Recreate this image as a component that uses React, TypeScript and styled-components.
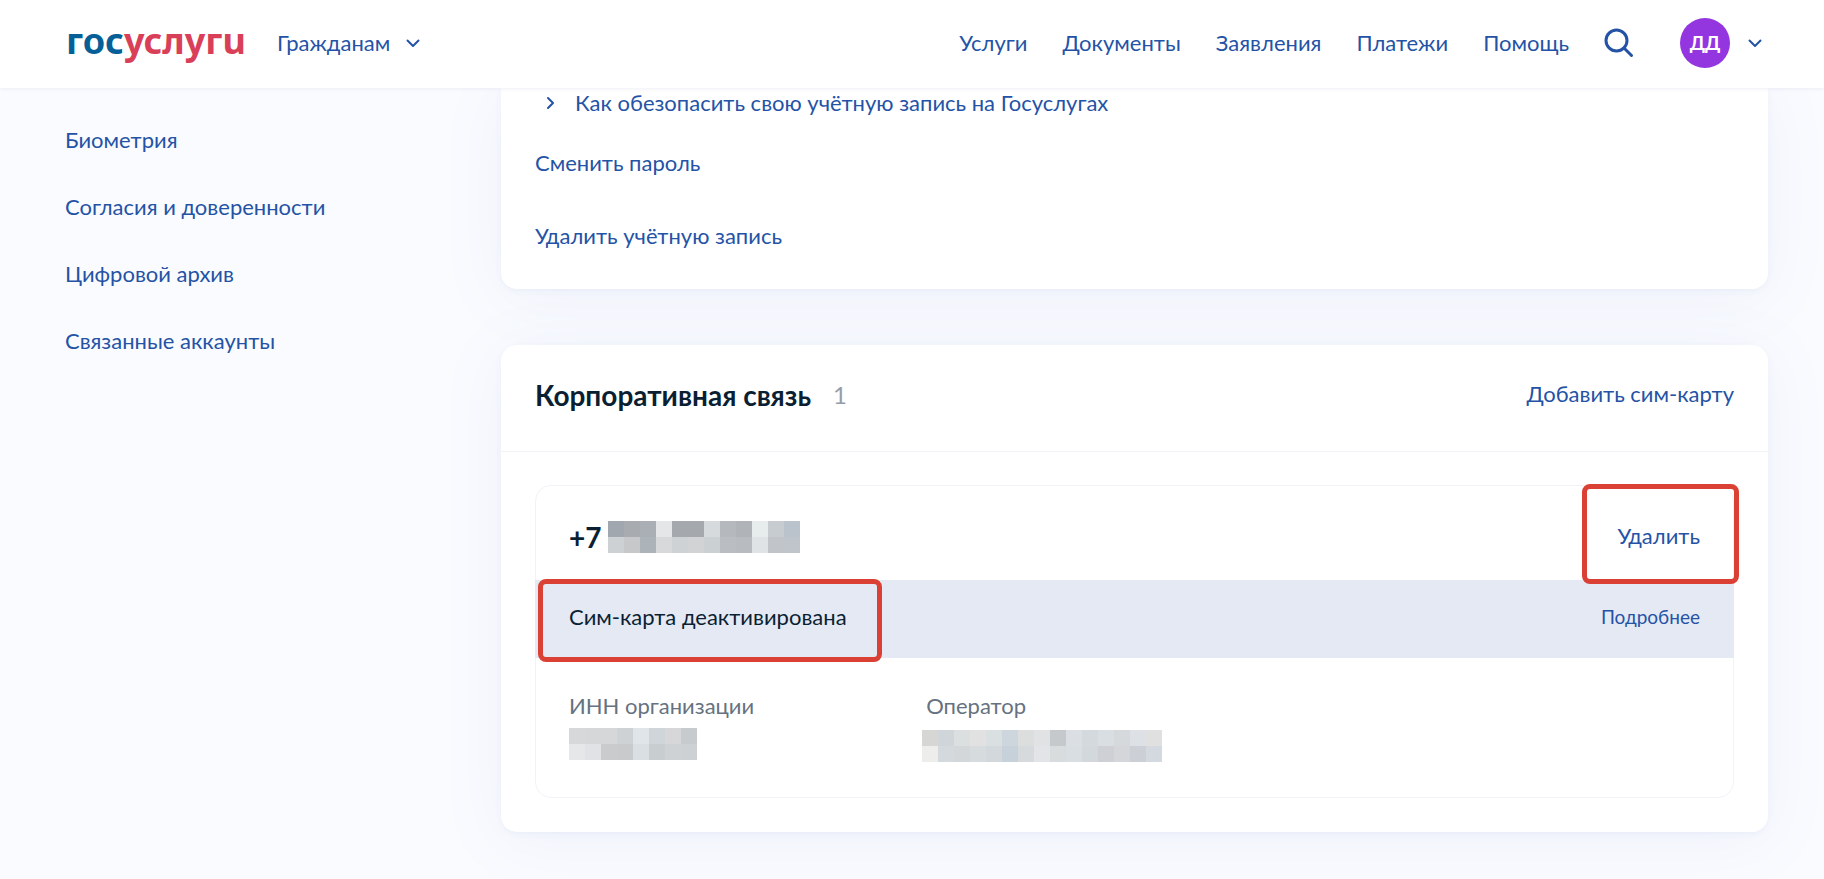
import React from 'react';
import styled, { createGlobalStyle } from 'styled-components';

const color = {
  link: '#2453a6',
  text: '#0b1f33',
  muted: '#66727f',
  faint: '#959da8',
  line: '#f2f3f7',
  page: '#fafbff',
  band: '#e5e9f4',
  marker: '#db4035',
};

const GlobalStyle = createGlobalStyle`
  * { box-sizing: border-box; }
  body {
    margin: 0;
    background: ${color.page};
    color: ${color.text};
    font: 22px/28px Lato, "Open Sans", sans-serif;
  }
`;

const Header = styled.header`
  position: relative;
  z-index: 1;
  display: flex;
  align-items: center;
  height: 88px;
  padding: 0 62px 2px 66px;
  background: #fff;
  box-shadow: 0 1px 4px rgba(60, 70, 140, 0.08);
`;

const LogoLink = styled.a`
  display: flex;
  margin-right: 25px;
`;

const PlainButton = styled.button`
  display: flex;
  align-items: center;
  padding: 0;
  border: 0;
  background: none;
  color: ${color.link};
  font: inherit;
  cursor: pointer;
`;

const AudienceButton = styled(PlainButton)`
  gap: 16px;
`;

const TopNav = styled.nav`
  display: flex;
  gap: 35px;
  margin-left: auto;
`;

const TextLink = styled.a<{ $small?: boolean }>`
  color: ${color.link};
  font-size: ${(p) => (p.$small ? 19 : 22)}px;
  text-decoration: none;
  white-space: nowrap;
`;

const SearchButton = styled(PlainButton)`
  margin: 0 46px 0 35px;
`;

const ProfileButton = styled(PlainButton)`
  gap: 18px;
`;

const Avatar = styled.span`
  display: flex;
  align-items: center;
  justify-content: center;
  width: 50px;
  height: 50px;
  border-radius: 50%;
  background: #9336df;
  color: #fff;
  font-size: 19px;
  font-weight: 700;
`;

const Layout = styled.div`
  display: grid;
  grid-template-columns: 436px minmax(0, 1fr);
  padding: 0 56px 47px 65px;
`;

const SideNav = styled.nav`
  display: flex;
  flex-direction: column;
  align-items: flex-start;
  gap: 39px;
  padding-top: 38px;
`;

const Content = styled.main`
  display: flex;
  flex-direction: column;
  gap: 56px;
`;

const Card = styled.section`
  border-radius: 16px;
  background: #fff;
  box-shadow: 0 2px 6px rgba(90, 120, 190, 0.06), 0 8px 64px rgba(90, 130, 190, 0.08);
`;

const SecurityCard = styled(Card)`
  display: flex;
  flex-direction: column;
  align-items: flex-start;
  padding: 1px 34px 39px;
  border-radius: 0 0 16px 16px;
`;

const HintLink = styled(TextLink)`
  display: flex;
  align-items: center;
  gap: 20px;
  margin-bottom: 32px;
  padding-left: 11px;
`;

const PasswordLink = styled(TextLink)`
  margin-bottom: 45px;
`;

const CardHeader = styled.div`
  display: flex;
  align-items: center;
  height: 107px;
  padding: 0 34px 6px;
  border-bottom: 1px solid ${color.line};
`;

const CardTitle = styled.h2`
  margin: 0;
  font-size: 28px;
  line-height: 36px;
`;

const Count = styled.span`
  margin-left: 22px;
  color: ${color.faint};
  font-size: 24px;
`;

const HeaderAction = styled(PlainButton)`
  margin-left: auto;
  padding-bottom: 2px;
`;

const SimCard = styled.article`
  margin: 33px 34px 0;
  border: 1px solid ${color.line};
  border-radius: 16px;
`;

const SimList = styled.div`
  padding-bottom: 34px;
`;

const SimRow = styled.div`
  position: relative;
  display: flex;
  align-items: center;
  justify-content: space-between;
  height: 94px;
  padding: 8px 33px 0;
`;

const StatusRow = styled(SimRow)`
  height: 78px;
  margin: 0 -1px;
  padding: 0 34px 4px;
  background: ${color.band};
`;

const Phone = styled.h3`
  display: flex;
  align-items: center;
  gap: 7px;
  margin: 0;
  font-size: 28px;
  line-height: 32px;
`;

const DeleteButton = styled(PlainButton)`
  padding-bottom: 2px;
`;

/* Red frames laid over the parts of the card that the guide points at. */
const Marker = styled.span`
  position: absolute;
  border: 5px solid ${color.marker};
  border-radius: 8px;
  pointer-events: none;
`;

const StatusMarker = styled(Marker)`
  inset: -1px auto -4px 3px;
  width: 344px;
`;

const DeleteMarker = styled(Marker)`
  inset: -2px -6px -4px auto;
  width: 157px;
  z-index: 1;
`;

const Details = styled.dl`
  display: flex;
  gap: 168px;
  height: 139px;
  margin: 0;
  padding: 34px 33px 0;
`;

const Detail = styled.div`
  dt {
    color: ${color.muted};
  }
  dd {
    display: flex;
    margin: 8px 0 0;
  }
`;

const DetailWide = styled(Detail)`
  dt {
    padding-left: 4px;
  }
  dd {
    margin-top: 10px;
  }
`;

const Chevron = ({ side = false }: { side?: boolean }) => (
  <svg width={side ? 9 : 14} height={side ? 14 : 9} viewBox={side ? '0 0 9 14' : '0 0 14 9'} fill="none"
    stroke="currentColor" strokeWidth="2" strokeLinecap="round" strokeLinejoin="round" aria-hidden="true">
    <path d={side ? 'M2 2l5 5-5 5' : 'M1.5 1.5L7 7l5.500-5.500'} />
  </svg>
);

const Mosaic = ({ rows, label }: { rows: string[][]; label: string }) => (
  <svg width={rows[0].length * 16} height={32} shapeRendering="crispEdges" role="img" aria-label={label}>
    {rows.map((row, y) =>
      row.map((fill, x) => <rect key={`${x}-${y}`} x={x * 16} y={y * 16} width="16" height="16" fill={fill} />),
    )}
  </svg>
);

const split = (s: string) => s.split(' ').map((c) => `#${c}`);

const phoneMosaic = [
  split('a0a7af a8acb0 a9afb5 e4e6e7 a5a8ac a5a8ac d7dadc b5b9be b0b4b8 e7eded c6cccf bac2cb'),
  split('ced1d4 c6c8c9 adb4b9 d7d9db cfd2d5 d1d3d4 cbd0d3 babec2 b8bbbf dfe3e5 c1c5c9 bfc5cb'),
];
const innMosaic = [
  split('d6d8da d6d7d9 d6d7d8 ced2d5 e0e5e9 d0d5d9 d7d7d9 c8cbce'),
  split('e6e7e9 e1e2e5 c9cbcd c8cacc d9dfe2 c8cdd0 ced2d5 cdd1d4'),
];
const operatorMosaic = [
  split('d6d6d5 d0d5d9 dbdfe0 e1e1e1 dadfe1 cdd6dc dcdede e1e2e4 c5c9cc dbdfe3 d3d9dd d8dee2 d5d9dc dde1e5 dfe0df'),
  split('ededec d3d9dc d3d7da d6dbdd d2d8db c6d1d9 d7dadd e3e4e7 d9dcdd d9dee2 d3d8dc ced0d5 d5d6d9 cccfd5 d3d9de'),
];

const Logo = () => (
  <svg width="186" height="60" viewBox="0 0 186 60" role="img" aria-label="госуслуги">
    <text x="0" y="41" fontFamily="'Noto Sans', 'Open Sans', sans-serif" fontWeight="700" fontSize="36">
      <tspan fill="#075f98">гос</tspan>
      <tspan fill="#d93f58">услугu</tspan>
    </text>
  </svg>
);

const topLinks = ['Услуги', 'Документы', 'Заявления', 'Платежи', 'Помощь'];
const sideLinks = ['Биометрия', 'Согласия и доверенности', 'Цифровой архив', 'Связанные аккаунты'];

export default function App() {
  return (
    <>
      <GlobalStyle />
      <Header>
        <LogoLink href="#home"><Logo /></LogoLink>
        <AudienceButton type="button">Гражданам <Chevron /></AudienceButton>
        <TopNav>
          {topLinks.map((t) => <TextLink key={t} href="#nav">{t}</TextLink>)}
        </TopNav>
        <SearchButton type="button" aria-label="Поиск">
          <svg width="30" height="30" viewBox="0 0 30 30" fill="none" stroke="currentColor" strokeWidth="3" strokeLinecap="round">
            <circle cx="12.500" cy="12.500" r="10.500" />
            <path d="M20 20l7.500 7.500" />
          </svg>
        </SearchButton>
        <ProfileButton type="button">
          <Avatar>ДД</Avatar>
          <Chevron />
        </ProfileButton>
      </Header>
      <Layout>
        <SideNav>
          {sideLinks.map((t) => <TextLink key={t} href="#section">{t}</TextLink>)}
        </SideNav>
        <Content>
          <SecurityCard>
            <HintLink href="#security"><Chevron side />Как обезопасить свою учётную запись на Госуслугах</HintLink>
            <PasswordLink href="#password">Сменить пароль</PasswordLink>
            <TextLink href="#remove">Удалить учётную запись</TextLink>
          </SecurityCard>
          <Card>
            <CardHeader>
              <CardTitle>Корпоративная связь</CardTitle>
              <Count>1</Count>
              <HeaderAction type="button">Добавить сим-карту</HeaderAction>
            </CardHeader>
            <SimList>
              <SimCard>
                <SimRow>
                  <Phone>+7 <Mosaic rows={phoneMosaic} label="Номер скрыт" /></Phone>
                  <DeleteButton type="button">Удалить</DeleteButton>
                  <DeleteMarker />
                </SimRow>
                <StatusRow>
                  <span>Сим-карта деактивирована</span>
                  <TextLink $small href="#details">Подробнее</TextLink>
                  <StatusMarker />
                </StatusRow>
                <Details>
                  <Detail>
                    <dt>ИНН организации</dt>
                    <dd><Mosaic rows={innMosaic} label="ИНН скрыт" /></dd>
                  </Detail>
                  <DetailWide>
                    <dt>Оператор</dt>
                    <dd><Mosaic rows={operatorMosaic} label="Оператор скрыт" /></dd>
                  </DetailWide>
                </Details>
              </SimCard>
            </SimList>
          </Card>
        </Content>
      </Layout>
    </>
  );
}
